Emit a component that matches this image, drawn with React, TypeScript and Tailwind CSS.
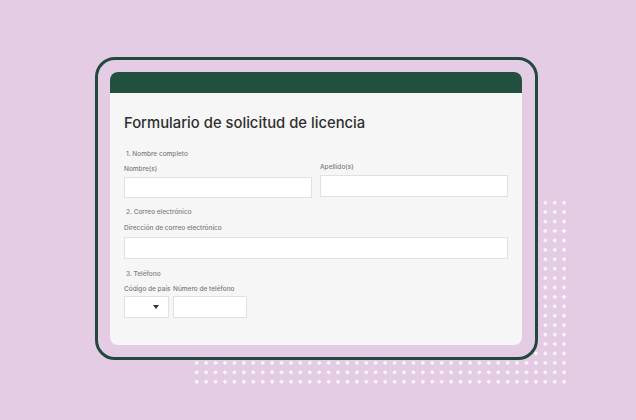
export default function App() {
  return (
    <div className="relative w-[636px] h-[420px] overflow-hidden bg-[#e4cde4] pl-[95px] pt-[57px] font-['Inter','Liberation_Sans',sans-serif]">
      {/* dot field behind the frame */}
      <div className="absolute left-[191.8px] top-[198.3px] w-[377.2px] h-[188.6px] bg-[radial-gradient(circle,#ffffff_1.4px,transparent_1.9px)] bg-[length:9.43px_9.43px] opacity-90" />

      <div className="relative w-[443px] h-[303px] rounded-[20px] border-[3px] border-[#23493c] bg-[#e4cde4] p-[12px] pr-[13px]">
        <div className="flex h-full flex-col overflow-hidden rounded-[8px] bg-[#f6f6f6]">
          <div className="h-[21px] bg-[#22503f]" />

          <div className="flex flex-col px-[14px] pt-[20px]">
            <h1 className="h-[20px] text-[14.8px] leading-[20px] font-medium text-[#2f2f2f]">
              Formulario de solicitud de licencia
            </h1>

            <p className="mt-[16px] pl-[2px] text-[6.5px] leading-[10px] font-medium text-[#7d7d7d]">
              1. Nombre completo
            </p>

            <div className="flex items-start gap-[8px]">
              <div className="flex w-[188px] flex-col">
                <span className="mt-[5px] text-[6.5px] leading-[10px] font-medium text-[#7a7a7a]">Nombre(s)</span>
                <div className="mt-[3px] h-[21px] border border-[#e1e1e1] bg-white" />
              </div>
              <div className="flex w-[188px] flex-col -mt-[2px]">
                <span className="mt-[5px] text-[6.5px] leading-[10px] font-medium text-[#7a7a7a]">Apellido(s)</span>
                <div className="mt-[3px] h-[22px] border border-[#e1e1e1] bg-white" />
              </div>
            </div>

            <p className="mt-[9px] pl-[2px] text-[6.5px] leading-[10px] font-medium text-[#7d7d7d]">
              2. Correo electrónico
            </p>
            <span className="mt-[6px] text-[6.5px] leading-[10px] font-medium text-[#7a7a7a]">
              Dirección de correo electrónico
            </span>
            <div className="mt-[4px] h-[22px] border border-[#e1e1e1] bg-white" />

            <p className="mt-[10px] pl-[2px] text-[6.5px] leading-[10px] font-medium text-[#7d7d7d]">
              3. Teléfono
            </p>
            <div className="flex items-start gap-[4px]">
              <div className="flex w-[45px] flex-col">
                <span className="mt-[5px] whitespace-nowrap text-[6.5px] leading-[10px] font-medium text-[#7a7a7a]">Código de país</span>
                <div className="mt-[2px] flex h-[22px] items-center justify-end border border-[#e1e1e1] bg-white pr-[9px]">
                  <svg width="6" height="4" viewBox="0 0 6 4">
                    <path d="M0 0 L6 0 L3 4 Z" fill="#333333" />
                  </svg>
                </div>
              </div>
              <div className="flex w-[74px] flex-col">
                <span className="mt-[5px] whitespace-nowrap text-[6.5px] leading-[10px] font-medium text-[#7a7a7a]">Número de teléfono</span>
                <div className="mt-[2px] h-[22px] border border-[#e1e1e1] bg-white" />
              </div>
            </div>
          </div>
        </div>
      </div>
    </div>
  );
}
